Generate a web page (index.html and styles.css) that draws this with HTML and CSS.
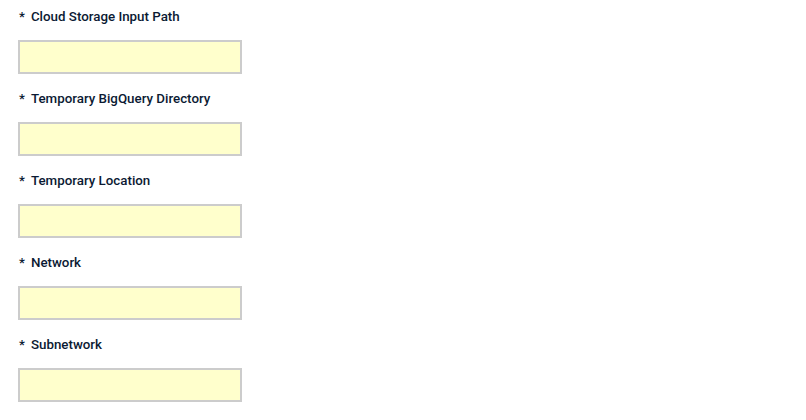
FILE: index.html
```html
<!DOCTYPE html>
<html lang="en">
<head>
  <meta charset="UTF-8" />
  <title>Pipeline Parameters</title>
  <link rel="stylesheet" href="styles.css">
</head>
<body>
  <form class="param-form">
    <div class="field">
      <label class="field-label"><span class="req">*</span>Cloud Storage Input Path</label>
      <input class="field-input" type="text">
    </div>
    <div class="field">
      <label class="field-label"><span class="req">*</span>Temporary BigQuery Directory</label>
      <input class="field-input" type="text">
    </div>
    <div class="field">
      <label class="field-label"><span class="req">*</span>Temporary Location</label>
      <input class="field-input" type="text">
    </div>
    <div class="field">
      <label class="field-label"><span class="req">*</span>Network</label>
      <input class="field-input" type="text">
    </div>
    <div class="field">
      <label class="field-label"><span class="req">*</span>Subnetwork</label>
      <input class="field-input" type="text">
    </div>
  </form>
</body>
</html>
```

FILE: styles.css
```css
body {
  margin: 0;
  background: #ffffff;
  font-family: Roboto, 'Liberation Sans', sans-serif;
  color: #0b1a33;
}

.param-form {
  padding: 9px 18px 8px;
}

.field {
  display: flex;
  flex-direction: column;
  align-items: flex-start;
  margin-bottom: 17px;
}

.field-label {
  font-size: 13.33px;
  font-weight: 500;
  line-height: 16px;
  margin-bottom: 15px;
  padding-left: 1px;
}

.req {
  margin-right: 6px;
}

.field-input {
  box-sizing: border-box;
  width: 224px;
  height: 34px;
  margin: 0;
  background: #ffffcc;
  border: 2px solid #cccccc;
  outline: none;
}
```
